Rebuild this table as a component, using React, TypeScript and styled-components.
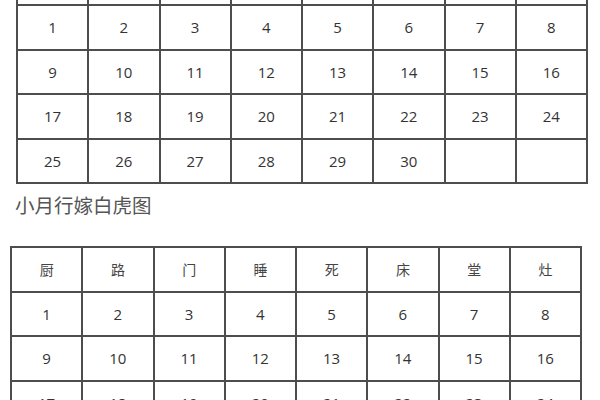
import React from "react";
import styled, { createGlobalStyle } from "styled-components";

const GlobalStyle = createGlobalStyle`
  html, body {
    margin: 0;
    padding: 0;
    background: #fff;
    overflow: hidden;
  }
  body {
    font-family: "Open Sans", "Noto Sans CJK SC", sans-serif;
  }
`;

const Page = styled.div`
  width: 600px;
  height: 400px;
  overflow: hidden;
  display: flex;
  flex-direction: column;
`;

const Grid = styled.div<{ $left: number; $top: number }>`
  display: grid;
  grid-template-columns: repeat(8, 1fr);
  grid-auto-rows: 42.5px;
  gap: 2px;
  padding: 2px;
  width: 568px;
  margin-left: ${({ $left }) => $left}px;
  margin-top: ${({ $top }) => $top}px;
  background: #4d4d4d;
  flex-shrink: 0;
`;

const Cell = styled.div`
  background: #fff;
  display: flex;
  align-items: center;
  justify-content: center;
  color: #333;
  font-size: 15px;
  font-family: "Open Sans", "Noto Sans CJK SC", sans-serif;
`;

const HeadCell = styled(Cell)`
  font-size: 14px;
  color: #444;
  font-family: "Noto Sans CJK SC", sans-serif;
`;

const Caption = styled.div`
  margin: 7px 0 0 15px;
  line-height: 28px;
  font-size: 19.5px;
  color: #555;
  font-family: "Noto Sans CJK SC", sans-serif;
  letter-spacing: 0;
`;

const days = Array.from({ length: 32 }, (_, i) => (i < 30 ? String(i + 1) : ""));
const heads = ["厨", "路", "门", "睡", "死", "床", "堂", "灶"];

const App: React.FC = () => (
  <>
    <GlobalStyle />
    <Page>
      <Grid $left={16} $top={-40.5}>
        {Array.from({ length: 8 }, (_, i) => (
          <HeadCell key={"h" + i} />
        ))}
        {days.map((d, i) => (
          <Cell key={i}>{d}</Cell>
        ))}
      </Grid>
      <Caption>小月行嫁白虎图</Caption>
      <Grid $left={10} $top={27}>
        {heads.map((h) => (
          <HeadCell key={h}>{h}</HeadCell>
        ))}
        {days.slice(0, 24).map((d, i) => (
          <Cell key={i}>{d}</Cell>
        ))}
      </Grid>
    </Page>
  </>
);

export default App;
